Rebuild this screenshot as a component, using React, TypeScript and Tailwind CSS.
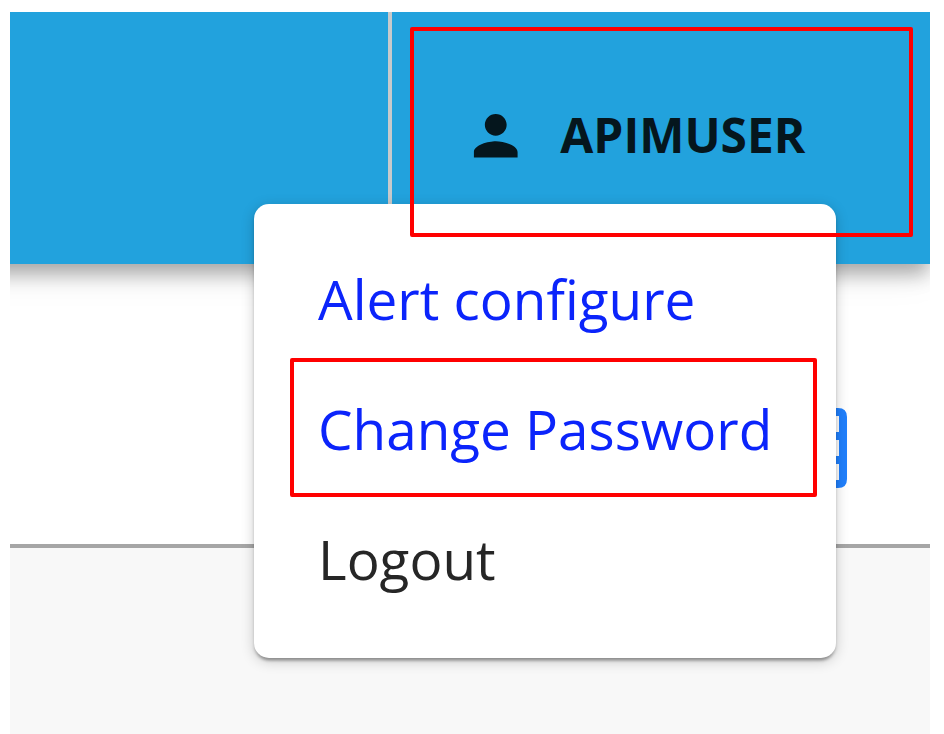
const menuItems = [
  { label: 'Alert configure', color: 'text-[#0b24fb]' },
  { label: 'Change Password', color: 'text-[#0b24fb]' },
  { label: 'Logout', color: 'text-[#262626]' },
];

function PersonIcon() {
  return (
    <svg viewBox="0 0 24 24" className="size-[65.5px] shrink-0" fill="currentColor">
      <path d="M12 12c2.21 0 4-1.79 4-4s-1.79-4-4-4-4 1.79-4 4 1.79 4 4 4zm0 2c-2.67 0-8 1.34-8 4v2h16v-2c0-2.66-5.33-4-8-4z" />
    </svg>
  );
}

function GridIcon() {
  return (
    <svg viewBox="0 0 80 80" className="size-20" fill="#2080fd" fillRule="evenodd">
      <path d="M9 0H71Q80 0 80 9V71Q80 80 71 80H9Q0 80 0 71V9Q0 0 9 0ZM8 8V24H72V8ZM8 32V48H72V32ZM8 56V72H72V56Z" />
    </svg>
  );
}

function AppHeader() {
  return (
    <header className="-ml-16 flex h-[252px] shrink-0 bg-[#22a2dd] pl-16 shadow-[0_12px_18px_-2px_rgba(0,0,0,0.3),0_5px_40px_0_rgba(0,0,0,0.1)]">
      <div className="w-[377.5px]" />
      <div className="w-1 bg-[#c8cacb]" />
      <button className="flex h-[247px] flex-1 items-center pl-[71.5px] text-[#05161d]">
        <PersonIcon />
        <span className="ml-[31.5px] pb-[1px] text-[47.9px] leading-none font-bold">APIMUSER</span>
      </button>
    </header>
  );
}

function UserMenu() {
  return (
    <ul className="absolute top-[204px] left-[254px] h-[454px] w-[582px] rounded-[15px] bg-white pt-[30px] shadow-[0_3px_14px_0_rgba(0,0,0,0.2),0_3px_3px_0_rgba(0,0,0,0.18),0_5px_3px_-3px_rgba(0,0,0,0.2)]">
      {menuItems.map((item) => (
        <li key={item.label} className={`flex h-[130px] items-center pl-[64px] text-[54.85px] leading-none whitespace-nowrap ${item.color}`}>
          {item.label}
        </li>
      ))}
    </ul>
  );
}

export default function App() {
  return (
    <div className="relative h-[734px] w-[944px] overflow-hidden bg-white pt-[12.3px] pl-[10.3px] font-['Open_Sans',sans-serif]">
      <main className="flex h-[722px] w-[919.4px] flex-col overflow-hidden">
        <AppHeader />
        <section className="flex h-[279.5px] shrink-0 items-start justify-end pt-[143.5px] pr-[82.5px]">
          <GridIcon />
        </section>
        <section className="flex-1 border-t-4 border-[#a6a6a6] bg-[#f8f8f8]" />
      </main>
      <UserMenu />
      <div className="absolute top-[27px] left-[410px] h-[210px] w-[503px] rounded-[2px] border-4 border-[#ff0000]" />
      <div className="absolute top-[358px] left-[290px] h-[139px] w-[527px] rounded-[2px] border-4 border-[#ff0000]" />
    </div>
  );
}
